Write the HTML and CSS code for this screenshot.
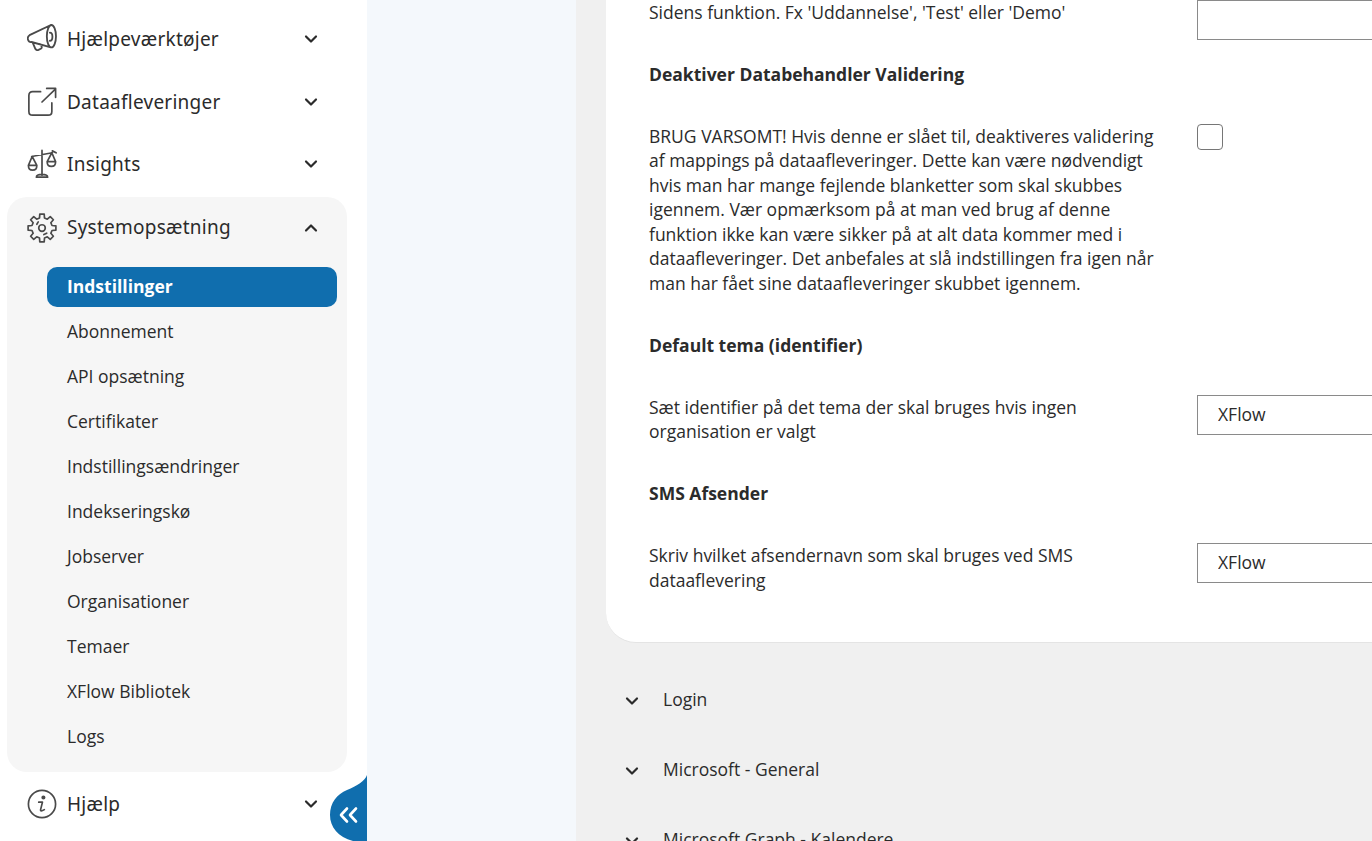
FILE: index.html
```html
<!DOCTYPE html>
<html lang="da">

<head>
    <meta charset="UTF-8">
    <meta name="viewport" content="width=device-width, initial-scale=1.0">
    <title>Indstillinger</title>
    <link rel="stylesheet" href="styles.css">
</head>

<body>
    <div class="page">
        <nav class="sidebar">
            <div class="nav-item">
                <svg class="nav-icon" viewBox="1 2 29.500 29.500"><path d="M25 3C27.500 3 29.500 8 29.500 14S27.500 25 25 25C22.500 25 20.500 20 20.500 14S22.500 3 25 3ZM24.500 3L3.500 13C2 14 1.500 16 2 17.500C2.500 19 4 20 5.500 19.700L24.500 25M6.500 20L9 26C9.500 27.500 11 28 12.300 27.400L14.500 26.300C15.500 25.800 15.700 24.800 15.300 24L14 21.800M23.500 10.500C25 10.500 26 12.300 26 14.500S25 18.500 23.500 18.500"/></svg>
                <span class="nav-label">Hjælpeværktøjer</span>
                <svg class="chevron" viewBox="0 0 14 10"><path d="M2 2.500L7 7.500L12 2.500"/></svg>
            </div>
            <div class="nav-item">
                <svg class="nav-icon" viewBox="0 0 32 32"><path d="M14.500 5H6C3.500 5 2 6.500 2 9V26C2 28.500 3.500 30 6 30H22.500C25 30 26.500 28.500 26.500 26V17M16 16L30 2.500M21 1.500H30.500V11"/></svg>
                <span class="nav-label">Dataafleveringer</span>
                <svg class="chevron" viewBox="0 0 14 10"><path d="M2 2.500L7 7.500L12 2.500"/></svg>
            </div>
            <div class="nav-item">
                <svg class="nav-icon" viewBox="0 0 32 32"><path d="M16 1.500V28M10 30C10 28 12 27 16 27S22 28 22 30ZM5 8L27 4M31 4L27 2M5.500 8L1.500 17.500H10.500ZM26.500 4L21.500 13.500H30.500ZM1.500 17.500C1.500 20.500 3 22.500 6 22.500S10.500 20.500 10.500 17.500M21.500 13.500C21.500 16.500 23 18.500 26 18.500S30.500 16.500 30.500 13.500"/></svg>
                <span class="nav-label">Insights</span>
                <svg class="chevron" viewBox="0 0 14 10"><path d="M2 2.500L7 7.500L12 2.500"/></svg>
            </div>

            <div class="nav-group">
                <div class="nav-item">
                    <svg class="nav-icon" viewBox="0 0 32 32"><path d="M13.340 5.330L13.650 1.180H18.350L18.660 5.330L21.670 6.570L24.820 3.870L28.140 7.180L25.430 10.330L26.670 13.340L30.820 13.650V18.350L26.670 18.660L25.430 21.670L28.140 24.820L24.820 28.130L21.670 25.430L18.660 26.670L18.350 30.820H13.650L13.340 26.670L10.330 25.430L7.180 28.130L3.870 24.820L6.570 21.670L5.330 18.660L1.180 18.350V13.650L5.330 13.340L6.570 10.330L3.870 7.180L7.180 3.870L10.330 6.570Z"/><circle cx="16" cy="16" r="3.500"/><path d="M10.500 12L12 9.500M18 23L21 21.500"/></svg>
                    <span class="nav-label">Systemopsætning</span>
                    <svg class="chevron" viewBox="0 0 14 10"><path d="M2 7.500L7 2.500L12 7.500"/></svg>
                </div>
                <ul class="sub-list">
                    <li class="sub-item active">Indstillinger</li>
                    <li class="sub-item">Abonnement</li>
                    <li class="sub-item">API opsætning</li>
                    <li class="sub-item">Certifikater</li>
                    <li class="sub-item">Indstillingsændringer</li>
                    <li class="sub-item">Indekseringskø</li>
                    <li class="sub-item">Jobserver</li>
                    <li class="sub-item">Organisationer</li>
                    <li class="sub-item">Temaer</li>
                    <li class="sub-item">XFlow Bibliotek</li>
                    <li class="sub-item">Logs</li>
                </ul>
            </div>

            <div class="nav-item">
                <svg class="nav-icon" viewBox="0 0 32 32"><circle cx="16" cy="16" r="14.500"/><circle cx="17.500" cy="9" r="1.300" class="dot"/><path d="M12.500 14H16.500L14.500 22C14.200 23.500 15.500 23.800 18.500 22"/></svg>
                <span class="nav-label">Hjælp</span>
                <svg class="chevron" viewBox="0 0 14 10"><path d="M2 2.500L7 7.500L12 2.500"/></svg>
            </div>

            <div class="collapse-tab">
                <svg viewBox="0 0 37 66"><path class="tab-bg" d="M37 0C35 6 27 11 17 15C7 19 0 28 0 40C0 52 8 62 23 66H37Z"/><path class="tab-arrows" d="M17 33.500L11 40L17 46.500M26 33.500L20 40L26 46.500"/></svg>
            </div>
        </nav>

        <div class="gutter"></div>

        <main class="content">
            <section class="card">
                <div class="setting first">
                    <p class="setting-text">Sidens funktion. Fx 'Uddannelse', 'Test' eller 'Demo'</p>
                    <input class="text-input" type="text">
                </div>

                <h3 class="setting-title first-title">Deaktiver Databehandler Validering</h3>
                <div class="setting">
                    <p class="setting-text">BRUG VARSOMT! Hvis denne er slået til, deaktiveres validering af mappings på dataafleveringer. Dette kan være nødvendigt hvis man har mange fejlende blanketter som skal skubbes igennem. Vær opmærksom på at man ved brug af denne funktion ikke kan være sikker på at alt data kommer med i dataafleveringer. Det anbefales at slå indstillingen fra igen når man har fået sine dataafleveringer skubbet igennem.</p>
                    <span class="checkbox"></span>
                </div>

                <h3 class="setting-title second-title">Default tema (identifier)</h3>
                <div class="setting">
                    <p class="setting-text">Sæt identifier på det tema der skal bruges hvis ingen organisation er valgt</p>
                    <input class="text-input" type="text" value="XFlow">
                </div>

                <h3 class="setting-title last-title">SMS Afsender</h3>
                <div class="setting">
                    <p class="setting-text">Skriv hvilket afsendernavn som skal bruges ved SMS dataaflevering</p>
                    <input class="text-input" type="text" value="XFlow">
                </div>
            </section>

            <div class="accordion">
                <svg class="chevron" viewBox="0 0 14 10"><path d="M2 2.500L7 7.500L12 2.500"/></svg>
                <span>Login</span>
            </div>
            <div class="accordion">
                <svg class="chevron" viewBox="0 0 14 10"><path d="M2 2.500L7 7.500L12 2.500"/></svg>
                <span>Microsoft - General</span>
            </div>
            <div class="accordion">
                <svg class="chevron" viewBox="0 0 14 10"><path d="M2 2.500L7 7.500L12 2.500"/></svg>
                <span>Microsoft Graph - Kalendere</span>
            </div>
        </main>
    </div>
</body>

</html>
```
FILE: styles.css
```css
html,
body {
    margin: 0;
    height: 100%;
    overflow: hidden;
}

body {
    font-family: "Open Sans", "Noto Sans", sans-serif;
    font-size: 17.5px;
    line-height: 24.5px;
    color: #2b2b2b;
}

.page {
    display: flex;
    height: 841px;
    overflow: hidden;
}

/* sidebar */
.sidebar {
    position: relative;
    flex: 0 0 367px;
    box-sizing: border-box;
    padding: 8px 0 0;
    background: white;
}

.nav-item {
    display: flex;
    align-items: center;
    height: 62.5px;
    padding-left: 27px;
}

.nav-icon {
    flex: 0 0 30px;
    width: 30px;
    height: 30px;
    margin-right: 10px;
    fill: none;
    stroke: #4a4a4a;
    stroke-width: 1.800;
    stroke-linecap: round;
    stroke-linejoin: round;
}

.nav-icon .dot {
    fill: #4a4a4a;
}

.nav-label {
    flex: 0 0 237px;
    font-family: "Noto Sans", "Open Sans", sans-serif;
    font-size: 19px;
    letter-spacing: 0.250px;
}

.chevron {
    width: 14px;
    height: 10px;
    fill: none;
    stroke: #2b2b2b;
    stroke-width: 2.200;
    stroke-linecap: round;
    stroke-linejoin: round;
}

.nav-group {
    margin: 1.500px 20px 1px 7px;
    padding-bottom: 15px;
    background: #f6f6f6;
    border-radius: 20px;
}

.nav-group .nav-item {
    height: 61px;
    padding-left: 20px;
}

.sub-list {
    list-style: none;
    margin: 9px 0 0;
    padding: 0 10px 0 40px;
}

.sub-item {
    display: flex;
    align-items: center;
    box-sizing: border-box;
    height: 40px;
    margin-bottom: 5px;
    padding: 0 0 2px 20px;
    border-radius: 10px;
}

.sub-item:last-child {
    margin-bottom: 0;
}

.sub-item.active {
    background: #106eae;
    color: white;
    font-weight: 700;
}

.collapse-tab {
    position: absolute;
    right: 0;
    top: 775px;
    width: 37px;
    height: 66px;
}

.collapse-tab svg {
    display: block;
    width: 37px;
    height: 66px;
}

.tab-bg {
    fill: #106eae;
}

.tab-arrows {
    fill: none;
    stroke: white;
    stroke-width: 2.600;
    stroke-linecap: round;
    stroke-linejoin: round;
}

/* main area */
.gutter {
    flex: 0 0 209px;
    background: #f4f8fc;
}

.content {
    flex: 1;
    min-width: 0;
    padding-left: 30px;
    background: #f0f0f0;
}

.card {
    width: 900px;
    box-sizing: border-box;
    padding: 0 0 50px 43px;
    background: white;
    border-bottom: 1px solid #e4e4e4;
    border-radius: 0 0 0 30px;
}

.setting {
    display: grid;
    grid-template-columns: 512px 1fr;
    column-gap: 36px;
    align-items: start;
}

.setting-text {
    margin: 0;
}

.setting-title {
    margin: 37px 0;
    font-size: 17.5px;
    font-weight: 700;
    line-height: 24.500px;
}

.setting-title.first-title {
    margin-top: 22px;
}

.setting-title.second-title {
    margin-top: 38px;
}

.setting-title.last-title {
    margin-bottom: 38px;
}

.text-input {
    box-sizing: border-box;
    width: 100%;
    height: 40px;
    padding: 0 20px 2px;
    border: 1px solid #8a8a8a;
    border-radius: 0;
    background: white;
    font: inherit;
    color: #2b2b2b;
}

.checkbox {
    display: block;
    box-sizing: border-box;
    width: 26px;
    height: 26px;
    border: 1px solid #767676;
    border-radius: 4px;
}

.accordion {
    display: flex;
    align-items: center;
    height: 70px;
    padding-left: 19px;
}

.accordion .chevron {
    flex: 0 0 14px;
    margin-right: 24px;
    margin-top: 3px;
}

.card + .accordion {
    margin-top: 21px;
}
```
